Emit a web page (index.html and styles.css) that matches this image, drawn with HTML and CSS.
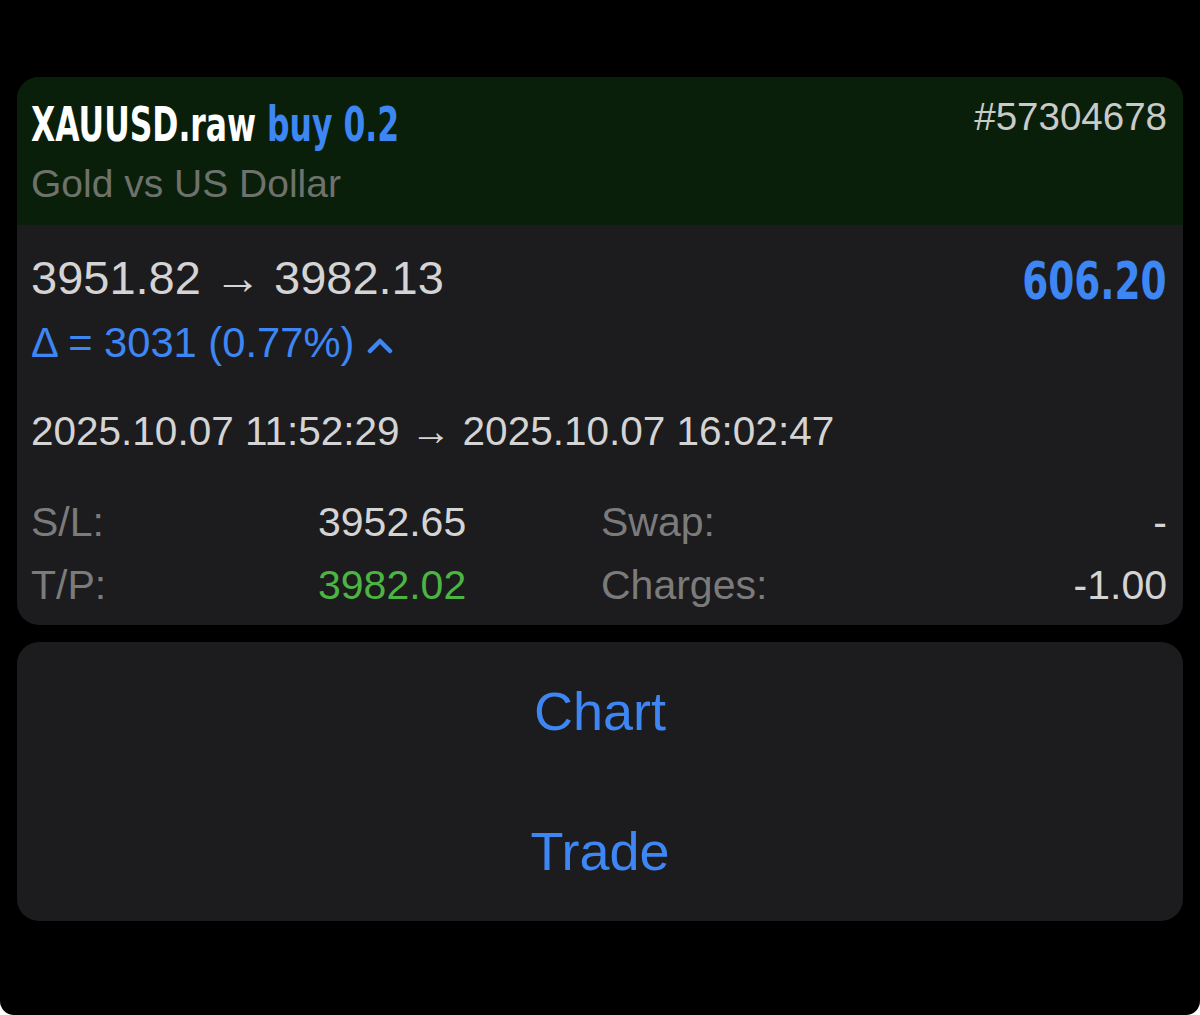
FILE: index.html
```html
<!DOCTYPE html>
<html lang="en">
<head>
    <meta charset="UTF-8">
    <meta name="viewport" content="width=device-width, initial-scale=1.0">
    <title>XAUUSD.raw #57304678</title>
    <link rel="stylesheet" href="styles.css">
</head>
<body>
    <div class="screen">
        <div class="deal-card">
            <div class="deal-head">
                <div class="head-row">
                    <div class="symbol">XAUUSD.raw <span class="side">buy 0.2</span></div>
                    <div class="ticket">#57304678</div>
                </div>
                <div class="desc">Gold vs US Dollar</div>
            </div>

            <div class="deal-body">
                <div class="price-row">
                    <div class="prices">3951.82 → 3982.13</div>
                    <div class="profit">606.20</div>
                </div>
                <div class="delta">
                    Δ = 3031 (0.77%)
                    <svg class="caret" width="26" height="18" viewBox="0 0 26 18">
                        <polyline points="3,15 13,5 23,15" fill="none" stroke="#3d86f3" stroke-width="4.5" stroke-linecap="round" stroke-linejoin="round"/>
                    </svg>
                </div>
                <div class="times">2025.10.07 11:52:29 → 2025.10.07 16:02:47</div>

                <div class="params">
                    <div class="label">S/L:</div>
                    <div class="value">3952.65</div>
                    <div class="label">Swap:</div>
                    <div class="value right">-</div>

                    <div class="label">T/P:</div>
                    <div class="value green">3982.02</div>
                    <div class="label">Charges:</div>
                    <div class="value right">-1.00</div>
                </div>
            </div>
        </div>

        <div class="actions">
            <div class="action">Chart</div>
            <div class="action">Trade</div>
        </div>
    </div>
</body>
</html>
```

FILE: styles.css
```css
body {
    margin: 0;
    background: #fff;
    font-family: "Liberation Sans", Arial, sans-serif;
}
.screen {
    background: #000;
    height: 1015px;
    box-sizing: border-box;
    padding: 77px 17px 0 17px;
    border-radius: 0 0 14px 14px;
}
.deal-card {
    background: #1c1c1e;
    border-radius: 22px;
    overflow: hidden;
}
.deal-head {
    background: #0a1f0a;
    padding: 15px 16px 13px 14px;
}
.head-row {
    display: flex;
    justify-content: space-between;
    align-items: flex-start;
}
/* condensed bold face, squeezed from DejaVu */
.symbol {
    font-family: "DejaVu Sans", sans-serif;
    font-weight: bold;
    font-size: 48px;
    line-height: 64px;
    color: #fff;
    white-space: nowrap;
    transform: scaleX(0.655);
    transform-origin: left center;
}
.side {
    color: #3d86f3;
}
.ticket {
    font-size: 38.5px;
    line-height: 50px;
    color: #c9cbc8;
}
.desc {
    font-size: 39px;
    line-height: 56px;
    color: #6e726d;
}
.deal-body {
    padding: 23px 16px 8px 14px;
}
.price-row {
    display: flex;
    justify-content: space-between;
    align-items: flex-start;
}
.prices {
    font-size: 47px;
    line-height: 60px;
    color: #d4d4d4;
}
.profit {
    font-family: "DejaVu Sans", sans-serif;
    font-weight: bold;
    font-size: 52px;
    line-height: 66px;
    color: #3d86f3;
    transform: scaleX(0.72);
    transform-origin: right center;
}
.delta {
    margin-top: 3px;
    font-size: 41.7px;
    line-height: 52px;
    color: #3d86f3;
    display: flex;
    align-items: center;
    gap: 13px;
}
.caret {
    margin-top: 4px;
}
.times {
    margin-top: 36px;
    font-size: 40.5px;
    line-height: 52px;
    color: #d4d4d4;
}
.params {
    margin-top: 34px;
    display: grid;
    grid-template-columns: 287px 283px 1fr auto;
    font-size: 41px;
    line-height: 63px;
}
.label {
    color: #7b7b7b;
}
.value {
    color: #d4d4d4;
}
.value.right {
    justify-self: end;
}
.value.green {
    color: #4cb541;
}
.actions {
    margin-top: 17px;
    background: #1c1c1e;
    border-radius: 22px;
}
.action {
    height: 139.5px;
    line-height: 139.5px;
    text-align: center;
    font-size: 54px;
    color: #3d86f3;
}
```
